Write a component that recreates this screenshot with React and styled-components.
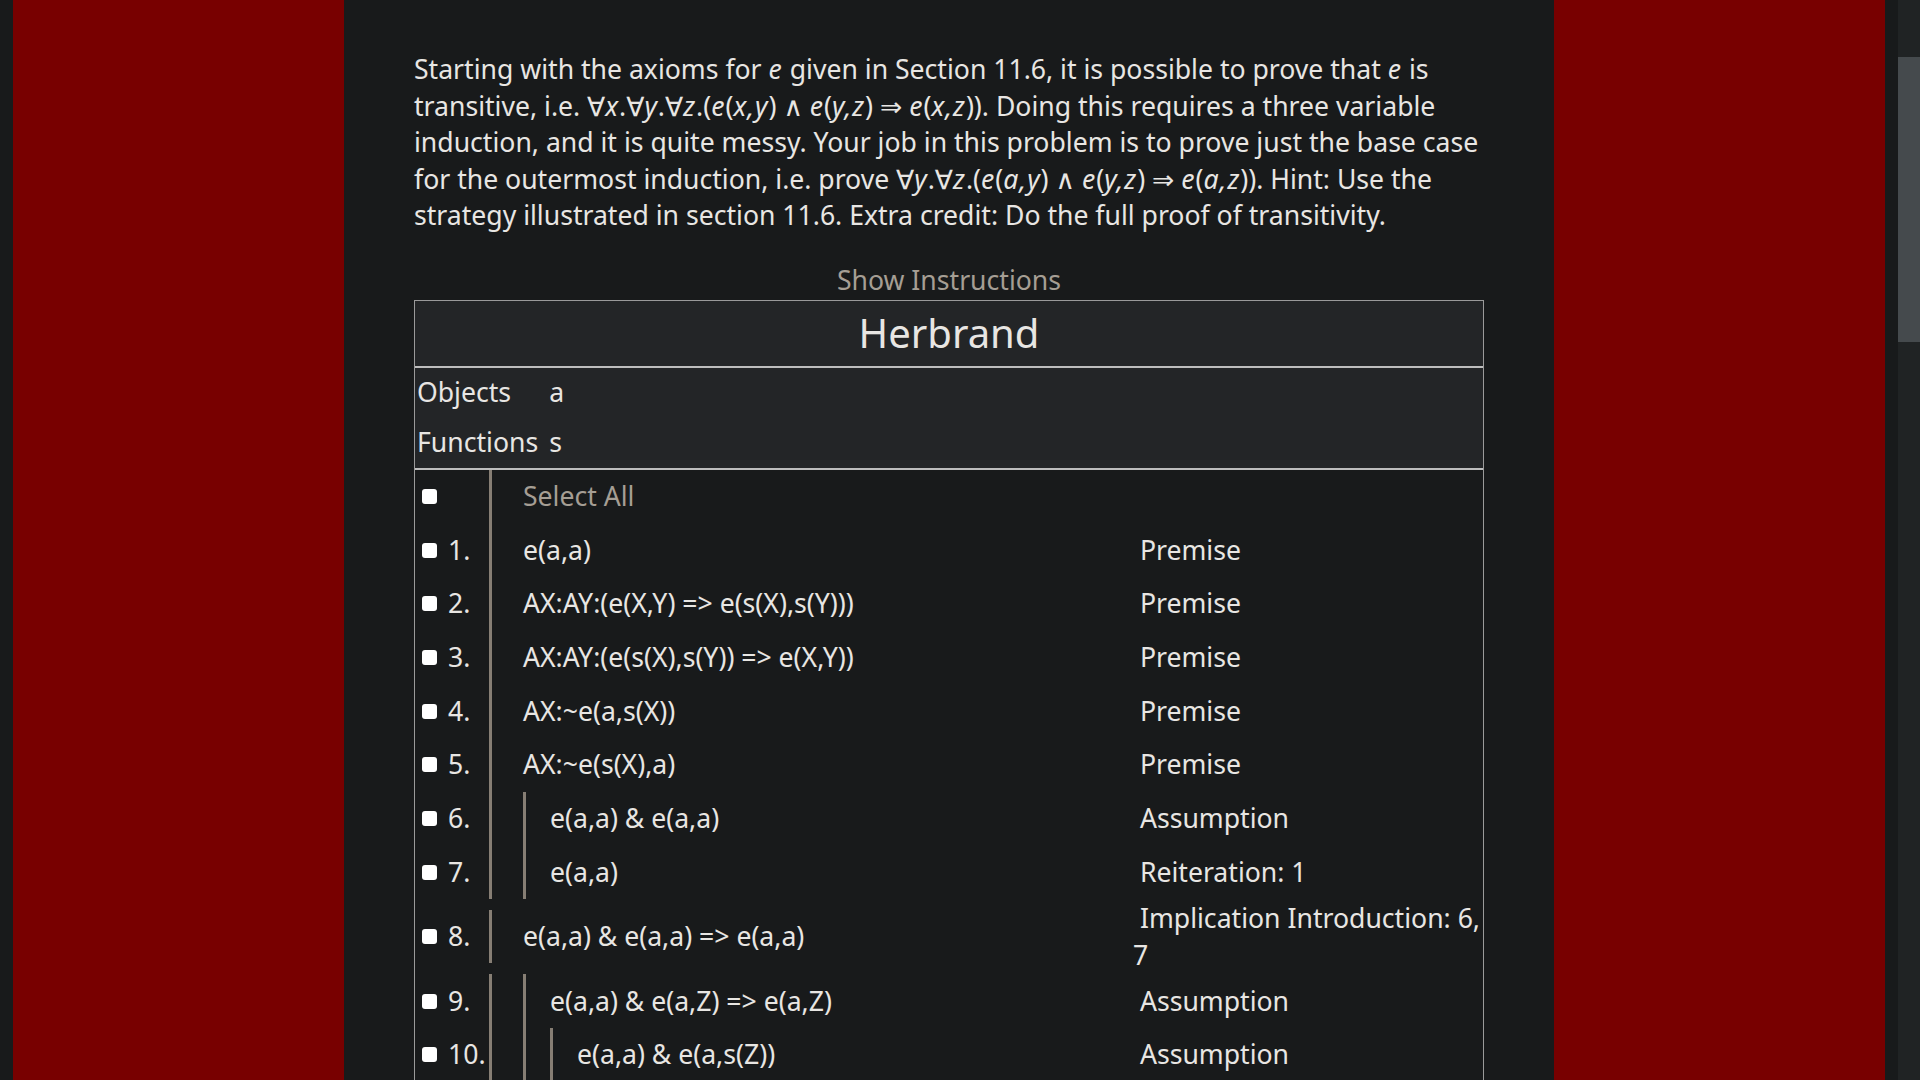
import React from 'react';
import styled, { createGlobalStyle } from 'styled-components';

const GlobalStyle = createGlobalStyle`
  html, body {
    margin: 0;
    padding: 0;
    overflow: hidden;
    background-color: #181a1b;
  }
  body {
    font-family: "Noto Sans", "Open Sans", "DejaVu Sans", sans-serif;
    color: #e8e6e3;
  }
`;

const Screen = styled.div`
  display: flex;
  width: 1920px;
  height: 1080px;
  overflow: hidden;
`;

const Page = styled.div`
  flex: 1;
  display: flex;
  padding: 0 13px;
  background-color: #181a1b;
`;

const RedFrame = styled.div`
  flex: 1;
  display: flex;
  justify-content: center;
  background-color: #780000;
`;

const Main = styled.main`
  width: 1210px;
  box-sizing: border-box;
  padding: 51px 70px 0;
  background-color: #181a1b;
  font-size: 26.6px;
  line-height: 36.6px;
`;

const Problem = styled.p`
  margin: 0 0 28px;
`;

// math variables in the problem text
const Var = styled.i`
  letter-spacing: 1px;
`;

const ShowInstructions = styled.div`
  text-align: center;
  color: #a59e94;
  cursor: pointer;
`;

const ProofTable = styled.div`
  border: 1px solid #9a9a9a;
  margin-top: 1px;
`;

const TitleRow = styled.div`
  display: flex;
  align-items: center;
  justify-content: center;
  height: 65px;
  background-color: #232527;
  font-size: 40px;
  border-bottom: 2px solid #bdbdbd;
`;

const Signature = styled.div`
  display: grid;
  grid-template-columns: auto 1fr;
  column-gap: 11px;
  background-color: #232527;
  border-bottom: 2px solid #bdbdbd;
`;

const SigLabel = styled.div`
  padding: 6.7px 0 6.7px 2px;
`;

const SigValue = styled.div`
  padding: 6.7px 0;
`;

const Line = styled.div`
  display: grid;
  grid-template-columns: 74px 644px 1fr;
  align-items: center;
`;

const NumberCell = styled.div`
  display: flex;
  align-items: center;
  gap: 11px;
  padding-left: 7px;
`;

const Box = styled.span`
  display: inline-block;
  width: 15px;
  height: 15px;
  border-radius: 3px;
  background-color: #ffffff;
  flex-shrink: 0;
`;

const FormulaCell = styled.div`
  display: flex;
  align-items: stretch;
  border-left: 3px solid #867e74;
  padding-left: 31px;
`;

const SubBar = styled.div`
  display: flex;
  align-items: stretch;
  border-left: 3px solid #867e74;
  padding-left: 24px;
`;

const Formula = styled.span`
  padding: 8.55px 0;
  white-space: nowrap;
  color: ${(p) => (p.$muted ? '#a59e94' : 'inherit')};
`;

const Reason = styled.div`
  padding: 1px 0;
`;

const ScrollTrack = styled.div`
  width: 22px;
  background-color: #202324;
  padding-top: 57px;
  box-sizing: border-box;
`;

const ScrollThumb = styled.div`
  height: 285px;
  background-color: #454a4d;
`;

const lines = [
  { n: 1, f: 'e(a,a)', d: 0, r: 'Premise' },
  { n: 2, f: 'AX:AY:(e(X,Y) => e(s(X),s(Y)))', d: 0, r: 'Premise' },
  { n: 3, f: 'AX:AY:(e(s(X),s(Y)) => e(X,Y))', d: 0, r: 'Premise' },
  { n: 4, f: 'AX:~e(a,s(X))', d: 0, r: 'Premise' },
  { n: 5, f: 'AX:~e(s(X),a)', d: 0, r: 'Premise' },
  { n: 6, f: 'e(a,a) & e(a,a)', d: 1, r: 'Assumption' },
  { n: 7, f: 'e(a,a)', d: 1, r: 'Reiteration: 1' },
  { n: 8, f: 'e(a,a) & e(a,a) => e(a,a)', d: 0, r: 'Implication Introduction: 6, 7' },
  { n: 9, f: 'e(a,a) & e(a,Z) => e(a,Z)', d: 1, r: 'Assumption' },
  { n: 10, f: 'e(a,a) & e(a,s(Z))', d: 2, r: 'Assumption' },
];

function Nest({ depth, children }) {
  if (depth === 0) return children;
  return (
    <SubBar>
      <Nest depth={depth - 1}>{children}</Nest>
    </SubBar>
  );
}

function App() {
  return (
    <Screen>
      <GlobalStyle />
      <Page>
        <RedFrame>
          <Main>
            <Problem>
              Starting with the axioms for <Var>e</Var> given in Section 11.6, it is possible to prove that{' '}
              <Var>e</Var> is transitive, i.e. ∀<Var>x</Var>.∀<Var>y</Var>.∀<Var>z</Var>.(<Var>e</Var>(<Var>x,y</Var>) ∧{' '}
              <Var>e</Var>(<Var>y,z</Var>) ⇒ <Var>e</Var>(<Var>x,z</Var>)). Doing this requires a three variable
              induction, and it is quite messy. Your job in this problem is to prove just the base case for the
              outermost induction, i.e. prove ∀<Var>y</Var>.∀<Var>z</Var>.(<Var>e</Var>(<Var>a,y</Var>) ∧{' '}
              <Var>e</Var>(<Var>y,z</Var>) ⇒ <Var>e</Var>(<Var>a,z</Var>)). Hint: Use the strategy illustrated in
              section 11.6. Extra credit: Do the full proof of transitivity.
            </Problem>
            <ShowInstructions>Show Instructions</ShowInstructions>
            <ProofTable>
              <TitleRow>Herbrand</TitleRow>
              <Signature>
                <SigLabel>Objects</SigLabel>
                <SigValue>a</SigValue>
                <SigLabel>Functions</SigLabel>
                <SigValue>s</SigValue>
              </Signature>
              <Line>
                <NumberCell>
                  <Box />
                </NumberCell>
                <FormulaCell>
                  <Formula $muted>Select All</Formula>
                </FormulaCell>
                <Reason />
              </Line>
              {lines.map((l) => (
                <Line key={l.n}>
                  <NumberCell>
                    <Box />
                    <span>{l.n}.</span>
                  </NumberCell>
                  <FormulaCell>
                    <Nest depth={l.d}>
                      <Formula>{l.f}</Formula>
                    </Nest>
                  </FormulaCell>
                  <Reason>{'\u00a0' + l.r}</Reason>
                </Line>
              ))}
            </ProofTable>
          </Main>
        </RedFrame>
      </Page>
      <ScrollTrack>
        <ScrollThumb />
      </ScrollTrack>
    </Screen>
  );
}

export default App;
